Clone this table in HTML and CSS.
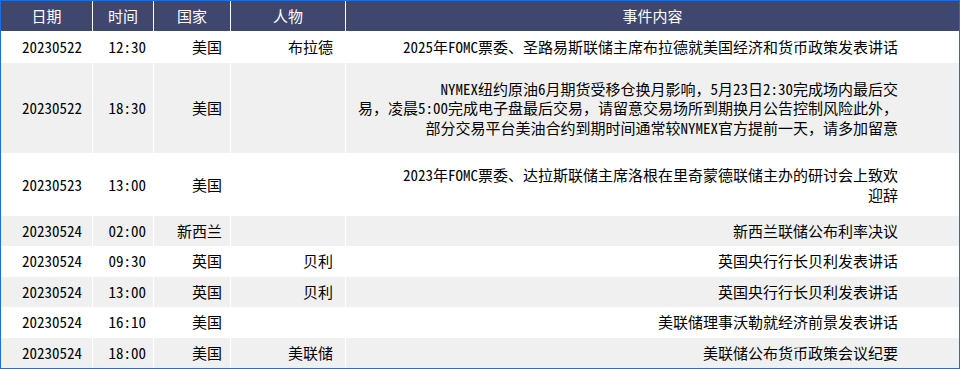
FILE: index.html
```html
<!DOCTYPE html>
<html lang="zh-CN">
<head>
<meta charset="utf-8">
<title>财经日历</title>
<link rel="stylesheet" href="styles.css">
</head>
<body>
<div class="table">
  <div class="row head">
    <div class="cell">日期</div>
    <div class="cell">时间</div>
    <div class="cell">国家</div>
    <div class="cell">人物</div>
    <div class="cell">事件内容</div>
  </div>
  <div class="row odd h31">
    <div class="cell c1">20230522</div>
    <div class="cell c2">12:30</div>
    <div class="cell c3">美国</div>
    <div class="cell c4">布拉德</div>
    <div class="cell c5">2025年FOMC票委、圣路易斯联储主席布拉德就美国经济和货币政策发表讲话</div>
  </div>
  <div class="row even h90">
    <div class="cell c1">20230522</div>
    <div class="cell c2">18:30</div>
    <div class="cell c3">美国</div>
    <div class="cell c4"></div>
    <div class="cell c5 wrap"><p class="lines">NYMEX纽约原油6月期货受移仓换月影响，5月23日2:30完成场内最后交<br>易，凌晨5:00完成电子盘最后交易，请留意交易场所到期换月公告控制风险此外，<br>部分交易平台美油合约到期时间通常较NYMEX官方提前一天，请多加留意</p></div>
  </div>
  <div class="row odd h61">
    <div class="cell c1">20230523</div>
    <div class="cell c2">13:00</div>
    <div class="cell c3">美国</div>
    <div class="cell c4"></div>
    <div class="cell c5 wrap"><p class="lines">2023年FOMC票委、达拉斯联储主席洛根在里奇蒙德联储主办的研讨会上致欢<br>迎辞</p></div>
  </div>
  <div class="row even">
    <div class="cell c1">20230524</div>
    <div class="cell c2">02:00</div>
    <div class="cell c3">新西兰</div>
    <div class="cell c4"></div>
    <div class="cell c5">新西兰联储公布利率决议</div>
  </div>
  <div class="row odd">
    <div class="cell c1">20230524</div>
    <div class="cell c2">09:30</div>
    <div class="cell c3">英国</div>
    <div class="cell c4">贝利</div>
    <div class="cell c5">英国央行行长贝利发表讲话</div>
  </div>
  <div class="row even">
    <div class="cell c1">20230524</div>
    <div class="cell c2">13:00</div>
    <div class="cell c3">英国</div>
    <div class="cell c4">贝利</div>
    <div class="cell c5">英国央行行长贝利发表讲话</div>
  </div>
  <div class="row odd">
    <div class="cell c1">20230524</div>
    <div class="cell c2">16:10</div>
    <div class="cell c3">美国</div>
    <div class="cell c4"></div>
    <div class="cell c5">美联储理事沃勒就经济前景发表讲话</div>
  </div>
  <div class="row even">
    <div class="cell c1">20230524</div>
    <div class="cell c2">18:00</div>
    <div class="cell c3">美国</div>
    <div class="cell c4">美联储</div>
    <div class="cell c5">美联储公布货币政策会议纪要</div>
  </div>
</div>
</body>
</html>
```
FILE: styles.css
```css
* { box-sizing: border-box; }
html, body { margin: 0; padding: 0; background: #ffffff; }
body {
  font-family: "Noto Sans Mono CJK SC", "Noto Sans CJK SC", "DejaVu Sans Mono", monospace;
  font-size: 15px;
  line-height: 18px;
  color: #000000;
}
.table {
  width: 960px;
  height: 369px;
  border: 1px solid #1a6fe6;
  display: flex;
  flex-direction: column;
  gap: 1px;
  background: #ffffff;
  overflow: hidden;
}
.row {
  display: grid;
  grid-template-columns: 91px 60px 76px 114px 1fr;
  column-gap: 1px;
  height: 29.5px;
  flex: none;
}
.row.head { height: 30px; }
.row.h31 { height: 30px; }
.row.h90 { height: 90px; }
.row.h61 { height: 61px; }
.cell {
  display: flex;
  align-items: center;
  justify-content: flex-end;
  text-align: right;
  white-space: nowrap;
}
.head .cell {
  background: #40476f;
  color: #ffffff;
  justify-content: center;
  font-weight: 400;
}
.odd .cell { background: #ffffff; }
.even .cell { background: #f0f0f0; }
.c1 { padding-right: 10px; }
.c2 { padding-right: 7px; }
.c3 { padding-right: 8px; }
.c4 { padding-right: 12px; }
.c5 { padding-right: 61px; }
.lines {
  margin: 0;
  line-height: 19.5px;
  text-align: right;
}
```
